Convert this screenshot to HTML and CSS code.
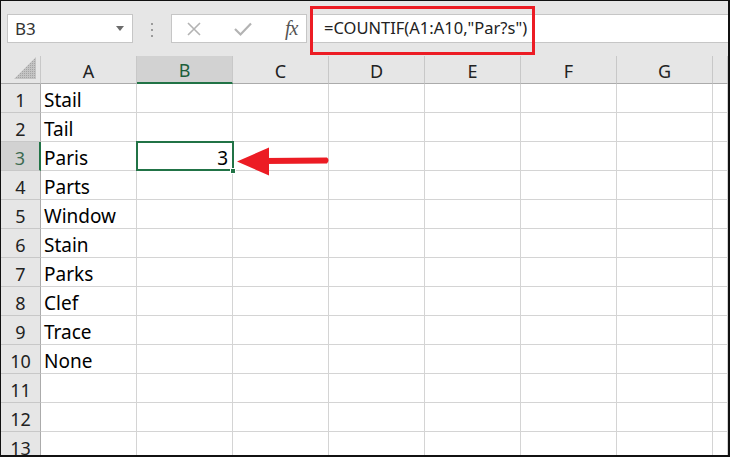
FILE: index.html
```html
<!DOCTYPE html>
<html lang="en">
    <head>
        <meta charset="UTF-8" />
        <meta name="viewport" content="width=device-width, initial-scale=1.0" />
        <link rel="stylesheet" href="styles.css">
        <title>COUNTIF</title>
    </head>
    <body>
        <div class="window">
            <div class="toolbar">
                <div class="namebox">
                    <span>B3</span>
                    <svg class="namebox__caret" width="8" height="5" viewBox="0 0 8 5"><path d="M0 0 L8 0 L4 5 Z" fill="#6b6b6b"/></svg>
                </div>
                <div class="grip"><i></i><i></i><i></i></div>
                <div class="fxbar">
                    <svg class="fxbar__icon" width="16" height="16" viewBox="0 0 16 16">
                        <path d="M2 2 L14 14 M14 2 L2 14" stroke="#b3b3b3" stroke-width="1.6" fill="none"/>
                    </svg>
                    <svg class="fxbar__icon" width="20" height="16" viewBox="0 0 20 16">
                        <path d="M2 8 L7.5 13.5 L18 2.5" stroke="#b3b3b3" stroke-width="2.2" fill="none"/>
                    </svg>
                    <span class="fxbar__fx">fx</span>
                </div>
                <div class="formula">=COUNTIF(A1:A10,"Par?s")</div>
                <div class="callout"></div>
            </div>

            <div class="sheet">
                <div class="corner">
                    <svg width="22" height="22" viewBox="0 0 22 22">
                        <defs>
                            <pattern id="hatch" width="2" height="2" patternUnits="userSpaceOnUse">
                                <rect width="2" height="2" fill="#c4c4c4"/>
                                <rect width="1" height="1" fill="#a4a4a4"/>
                            </pattern>
                        </defs>
                        <path d="M22 0 L22 22 L0 22 Z" fill="url(#hatch)"/>
                    </svg>
                </div>
                <div class="colhead">A</div>
                <div class="colhead colhead--active">B</div>
                <div class="colhead">C</div>
                <div class="colhead">D</div>
                <div class="colhead">E</div>
                <div class="colhead">F</div>
                <div class="colhead">G</div>
                <div class="colhead"></div>
            </div>
        </div>

        <svg class="arrow" width="730" height="457" viewBox="0 0 730 457">
            <path d="M264 158 L327 157.5 Q330 160 327 163.5 L264 164 Z" fill="#ec1c24"/>
            <path d="M237 161.5 L269 147.5 L269 175.5 Z" fill="#ec1c24"/>
        </svg>

        <script>
            const sheet = document.querySelector('.sheet');

            const words = ['Stail', 'Tail', 'Paris', 'Parts', 'Window', 'Stain', 'Parks', 'Clef', 'Trace', 'None'];

            // build the 13 rows

            for (let r = 1; r <= 13; r++) {
                const head = document.createElement('div');
                head.className = r === 3 ? 'rowhead rowhead--active' : 'rowhead';
                head.textContent = r;
                sheet.appendChild(head);

                for (let c = 0; c < 8; c++) {
                    const cell = document.createElement('div');
                    cell.className = 'cell';

                    if (c === 0 && words[r - 1]) {
                        cell.textContent = words[r - 1];
                    }

                    if (c === 1 && r === 3) {
                        cell.className = 'cell cell--active cell--num';
                        cell.textContent = '3';
                    }

                    sheet.appendChild(cell);
                }
            }
        </script>
    </body>
</html>
```

FILE: styles.css
```css
*,
*::before,
*::after {
    box-sizing: border-box;
}

body {
    margin: 0;
    overflow: hidden;
    font-family: 'Noto Sans', 'Open Sans', sans-serif;
    color: #111;
}

.window {
    position: relative;
    width: 730px;
    height: 457px;
    overflow: hidden;
    background: #fff;
    border-top: 1px solid #111;
    border-left: 1px solid #111;
    border-right: 2px solid #111;
    border-bottom: 2px solid #111;
}

/* formula bar */

.toolbar {
    position: relative;
    display: flex;
    align-items: flex-start;
    height: 55px;
    padding-top: 13px;
    background: #e6e6e6;
}

.namebox {
    display: flex;
    align-items: center;
    justify-content: space-between;
    width: 126px;
    height: 29px;
    margin-left: 6px;
    padding: 0 8px 0 7px;
    background: #fff;
    border: 1px solid #c6c6c6;
    font-size: 17px;
    color: #333;
}

.grip {
    display: flex;
    flex-direction: column;
    align-items: center;
    gap: 4px;
    width: 38px;
    padding-top: 9px;
}

.grip i {
    display: block;
    width: 2px;
    height: 2px;
    background: #9a9a9a;
}

.fxbar {
    display: flex;
    align-items: center;
    width: 136px;
    height: 29px;
    padding-left: 14px;
    gap: 31px;
    background: #fff;
    border: 1px solid #c6c6c6;
}

.fxbar__fx {
    margin-left: 1px;
    font-family: 'Liberation Serif', serif;
    font-style: italic;
    font-size: 20px;
    color: #555;
    letter-spacing: -1px;
}

.formula {
    flex: 1;
    height: 29px;
    margin-left: 3px;
    padding-left: 14px;
    line-height: 26px;
    background: #fff;
    border-top: 1px solid #c6c6c6;
    border-bottom: 1px solid #c6c6c6;
    font-size: 16.5px;
    color: #222;
}

.callout {
    position: absolute;
    left: 309px;
    top: 5px;
    width: 225px;
    height: 49px;
    border: 3px solid #ec1c24;
}

/* grid */

.sheet {
    display: grid;
    grid-template-columns: 40px repeat(7, 96px) 1fr;
    grid-template-rows: 28px;
    grid-auto-rows: 29px;
}

.corner {
    display: flex;
    align-items: flex-end;
    justify-content: flex-end;
    padding: 0 4px 4px 0;
    background: #e6e6e6;
    border-right: 1px solid #c8c8c8;
    border-bottom: 1px solid #ababab;
}

.colhead {
    display: flex;
    align-items: center;
    justify-content: center;
    padding-top: 2px;
    background: #e6e6e6;
    border-right: 1px solid #c8c8c8;
    border-bottom: 1px solid #ababab;
    font-size: 18px;
    color: #222;
}

.colhead--active {
    background: #d2d2d2;
    border-bottom: 2px solid #217346;
    color: #1d5f3b;
}

.rowhead {
    display: flex;
    align-items: center;
    justify-content: center;
    padding-top: 3px;
    background: #e6e6e6;
    border-right: 1px solid #ababab;
    border-bottom: 1px solid #c8c8c8;
    font-size: 18px;
    color: #222;
}

.rowhead--active {
    background: #d2d2d2;
    border-right: 2px solid #217346;
    color: #3c6b50;
}

.cell {
    display: flex;
    align-items: center;
    padding: 3px 0 0 3px;
    border-right: 1px solid #d4d4d4;
    border-bottom: 1px solid #d4d4d4;
    font-size: 19px;
    color: #000;
    white-space: nowrap;
}

.cell--num {
    justify-content: flex-end;
    padding-right: 4px;
}

.cell--active {
    position: relative;
}

.cell--active::after {
    content: '';
    position: absolute;
    left: -1px;
    top: -1px;
    right: -2px;
    bottom: -1px;
    border: 2px solid #217346;
}

.cell--active::before {
    content: '';
    position: absolute;
    right: -4px;
    bottom: -4px;
    width: 6px;
    height: 6px;
    background: #217346;
    border: 1px solid #fff;
    z-index: 1;
}

.arrow {
    position: absolute;
    left: 0;
    top: 0;
    pointer-events: none;
}
```
